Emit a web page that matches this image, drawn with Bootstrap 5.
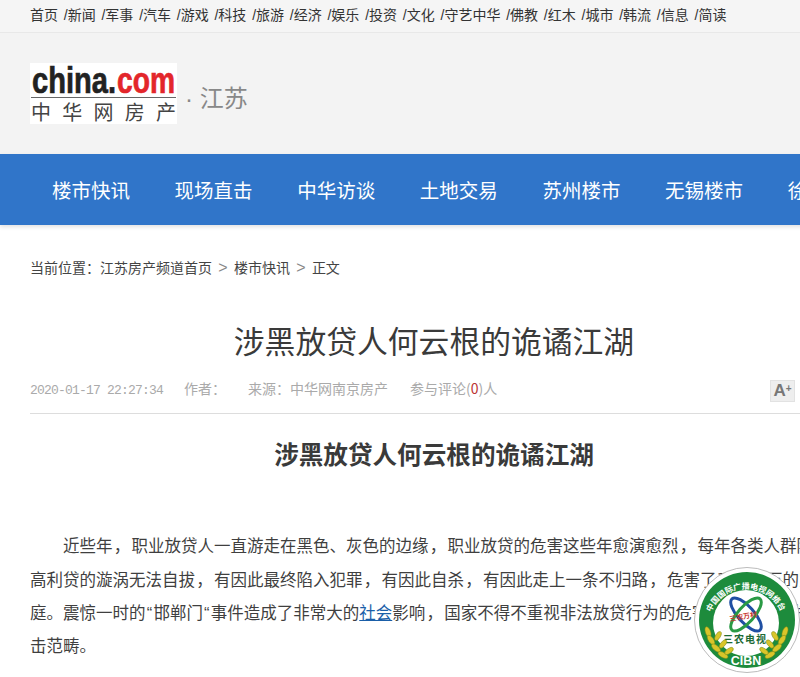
<!doctype html>
<html lang="zh"><head><meta charset="utf-8"><title>涉黑放贷人何云根的诡谲江湖</title>
<link href="https://cdn.jsdelivr.net/npm/bootstrap@5.3.0/dist/css/bootstrap.min.css" rel="stylesheet">
<style>
html,body{overflow:hidden;height:677px;background:#fff}
body{font-family:"Noto Sans CJK SC","Liberation Sans",sans-serif;color:#333;position:relative}
.topbar{height:33px;background:#f5f5f5;border-bottom:1px solid #e8e8e8;font-size:14px;line-height:31px;padding-left:30px;white-space:nowrap;font-family:"Liberation Sans","Noto Sans CJK SC",sans-serif}
.topbar a{color:#333;text-decoration:none;margin-right:1.9px}
.brandrow{height:121px;background:#f3f3f3;padding-left:30px;gap:8px}
.channel{font-size:24px;color:#888;line-height:1;padding-top:11px;font-family:"Liberation Sans","Noto Sans CJK SC",sans-serif}
.mainnav{height:71px;background:#3075c9;box-shadow:0 2px 4px rgba(0,0,0,.12);padding-left:52px;gap:44.6px;white-space:nowrap;width:1000px}
.mainnav a{color:#fff;font-size:19.5px;text-decoration:none;line-height:71px}
.crumbs{font-size:14px;padding:32px 0 0 30px;line-height:20px;color:#444;height:92px;white-space:nowrap}
.crumbs i{font-style:normal;font-size:16px;color:#888;margin:0 6.3px;font-family:"Liberation Sans",sans-serif}
.articlewrap{margin-left:30px;width:808px}
.headline{font-size:30.8px;font-weight:400;text-align:center;margin:0;line-height:46px;color:#3a3a3a}
.metaline{height:45px;border-bottom:1px solid #ddd;font-size:14px;color:#aaa;margin-top:6px;white-space:nowrap;padding-top:9px;position:relative}
.stamp{font-family:"Liberation Mono",monospace;font-size:13px;letter-spacing:-.8px;margin-right:21px}
.metaline span.gapr{margin-right:22px}
.metaline em{color:#b33;font-style:normal}
.sizer{position:absolute;left:740px;top:11px;width:25px;height:22px;background:#eee;border:1px solid #e2e2e2;color:#777;font:700 17px/20px "Liberation Sans",sans-serif;text-align:center}
.sizer sup{font-size:10px;top:-.4em}
.subhead{font-size:24.6px;font-weight:700;text-align:center;margin:0;padding-top:21px;line-height:36px;color:#3a3a3a}
.para{font-family:"Liberation Sans","Noto Sans CJK SC",sans-serif;font-size:16.5px;line-height:32.6px;margin:58px 0 0;color:#3f3f3f;white-space:nowrap;text-spacing-trim:space-all}
.para .lead-in{margin-left:33px}
.para a{color:#1a5ea8}
.cm{font-family:"Noto Sans CJK TC",sans-serif;margin:0 1.25px}
.qm{margin:0 1.2px}
.badge-mark{position:absolute;left:694px;top:567px;width:106px;height:106px}
</style></head><body>
<div class="topbar"><a href="#">首页</a> <a href="#">/新闻</a> <a href="#">/军事</a> <a href="#">/汽车</a> <a href="#">/游戏</a> <a href="#">/科技</a> <a href="#">/旅游</a> <a href="#">/经济</a> <a href="#">/娱乐</a> <a href="#">/投资</a> <a href="#">/文化</a> <a href="#">/守艺中华</a> <a href="#">/佛教</a> <a href="#">/红木</a> <a href="#">/城市</a> <a href="#">/韩流</a> <a href="#">/信息</a> <a href="#">/简读</a></div>
<div class="brandrow d-flex align-items-center">
<svg width="147" height="61" viewBox="0 0 147 61" role="img" aria-label="china.com 中华网房产"><rect width="147" height="61" fill="#fff"/>
<text x="2" y="30" font-family="Liberation Sans" font-weight="700" font-size="37" textLength="84" lengthAdjust="spacingAndGlyphs" fill="#222" stroke="#222" stroke-width=".7">china.</text>
<text x="87" y="30" font-family="Liberation Sans" font-weight="700" font-size="37" textLength="58" lengthAdjust="spacingAndGlyphs" fill="#e3262b" stroke="#e3262b" stroke-width=".7">com</text>
<rect x="1" y="34" width="145" height="1" fill="#666"/>
<text x="1" y="57" font-family="Noto Sans CJK SC" font-size="20" textLength="145" fill="#444">中华网房产</text></svg>
<div class="channel">· 江苏</div></div>
<nav class="mainnav d-flex"><a href="#">楼市快讯</a><a href="#">现场直击</a><a href="#">中华访谈</a><a href="#">土地交易</a><a href="#">苏州楼市</a><a href="#">无锡楼市</a><a href="#">徐州楼市</a></nav>
<div class="crumbs">当前位置：江苏房产频道首页<i>&gt;</i>楼市快讯<i>&gt;</i>正文</div>
<main class="articlewrap">
<h1 class="headline">涉黑放贷人何云根的诡谲江湖</h1>
<div class="metaline"><span class="stamp">2020-01-17 22:27:34</span><span class="gapr">作者：</span><span class="gapr">来源：中华网南京房产</span><span>参与评论(<em>0</em>)人</span><div class="sizer">A<sup>+</sup></div></div>
<h2 class="subhead">涉黑放贷人何云根的诡谲江湖</h2>
<p class="para"><span class="lead-in">近些年</span><span class="cm">，</span>职业放贷人一直游走在黑色、灰色的边缘<span class="cm">，</span>职业放贷的危害这些年愈演愈烈<span class="cm">，</span>每年各类人群陷入<br>高利贷的漩涡无法自拔<span class="cm">，</span>有因此最终陷入犯罪<span class="cm">，</span>有因此自杀<span class="cm">，</span>有因此走上一条不归路<span class="cm">，</span>危害了千千万万的家<br>庭。震惊一时的<span class="qm">“</span>邯郸门<span class="qm">“</span>事件造成了非常大的<a href="#">社会</a>影响<span class="cm">，</span>国家不得不重视非法放贷行为的危害<span class="cm">，</span>决心从严打<br>击范畴。</p>
</main>
<svg class="badge-mark" viewBox="0 0 106 106" role="img" aria-label="三农电视 CIBN">
<defs><path id="ringtop" d="M17 45.2 A38 38 0 0 1 87 45.2"/></defs>
<circle cx="53" cy="53" r="52.5" fill="#fff" stroke="#bbb"/>
<circle cx="53" cy="53" r="48" fill="#1d8b3c"/>
<circle cx="52" cy="56" r="33" fill="#fff"/>
<text font-family="Noto Sans CJK SC" font-size="8" font-weight="700" fill="#fff"><textPath href="#ringtop" textLength="88">中国国际广播电视网络台</textPath></text>
<ellipse cx="52" cy="47.5" rx="8" ry="21" transform="rotate(-42 52 47.5)" fill="none" stroke="#1f4fa3" stroke-width="3"/>
<ellipse cx="52" cy="47.5" rx="8" ry="21" transform="rotate(42 52 47.5)" fill="none" stroke="#2a9a45" stroke-width="3"/>
<text x="49" y="52" text-anchor="middle" transform="rotate(-10 49 49)" font-family="Noto Sans CJK SC" font-size="7" font-weight="700" fill="#c8372d">三农万村</text>
<text x="51" y="76" text-anchor="middle" font-family="Noto Sans CJK SC" font-size="10" font-weight="700" letter-spacing="1" fill="#1d6a35">三农电视</text>
<g fill="#d9c52a" stroke="#7a8a14" stroke-width=".5">
<g transform="translate(2 6)"><ellipse cx="12" cy="59" rx="5.5" ry="2.6" transform="rotate(70 12 59)"/><ellipse cx="15" cy="67" rx="5.5" ry="2.6" transform="rotate(55 15 67)"/><ellipse cx="20" cy="75" rx="5.5" ry="2.6" transform="rotate(40 20 75)"/><ellipse cx="27" cy="82" rx="5.5" ry="2.6" transform="rotate(28 27 82)"/><ellipse cx="22" cy="63" rx="5" ry="2.4" transform="rotate(-60 22 63)"/><ellipse cx="27" cy="71" rx="5" ry="2.4" transform="rotate(-50 27 71)"/><ellipse cx="33" cy="78" rx="5" ry="2.4" transform="rotate(-35 33 78)"/></g>
<g transform="translate(-3 6)"><ellipse cx="94" cy="59" rx="5.5" ry="2.6" transform="rotate(-70 94 59)"/><ellipse cx="91" cy="67" rx="5.5" ry="2.6" transform="rotate(-55 91 67)"/><ellipse cx="86" cy="75" rx="5.5" ry="2.6" transform="rotate(-40 86 75)"/><ellipse cx="79" cy="82" rx="5.5" ry="2.6" transform="rotate(-28 79 82)"/><ellipse cx="84" cy="63" rx="5" ry="2.4" transform="rotate(60 84 63)"/><ellipse cx="79" cy="71" rx="5" ry="2.4" transform="rotate(50 79 71)"/><ellipse cx="73" cy="78" rx="5" ry="2.4" transform="rotate(35 73 78)"/></g>
</g>
<text x="52" y="98" text-anchor="middle" font-family="Liberation Sans" font-size="12.5" font-weight="700" fill="#fff">CIBN</text>
</svg>
<script src="https://cdn.jsdelivr.net/npm/bootstrap@5.3.0/dist/js/bootstrap.bundle.min.js"></script>
</body></html>
